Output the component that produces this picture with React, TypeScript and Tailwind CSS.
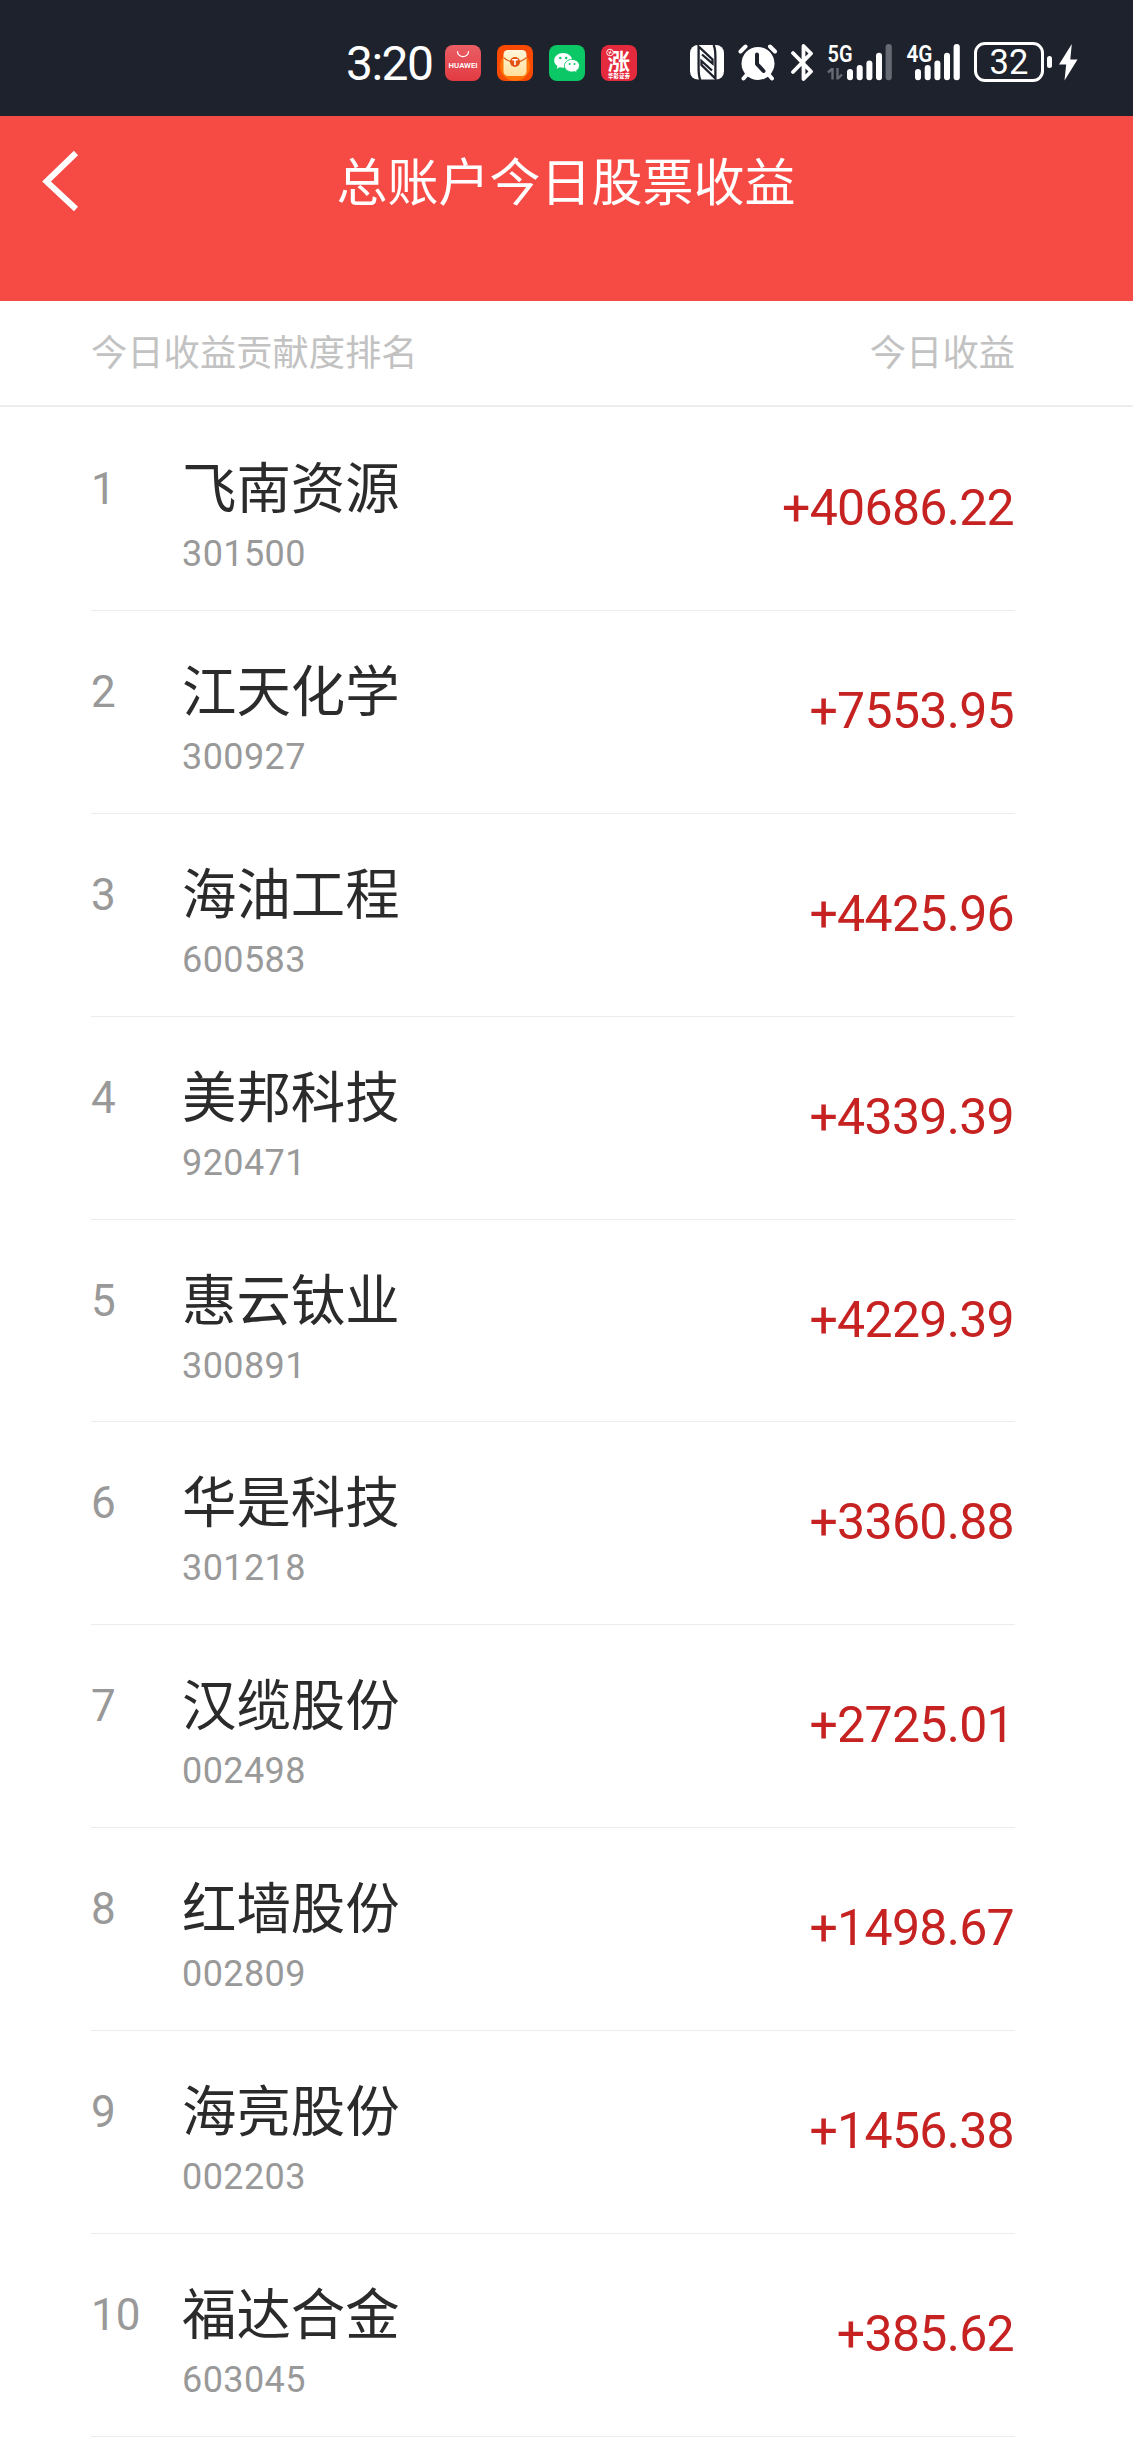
interface Stock {
  name: string;
  code: string;
  profit: string;
}

const stocks: Stock[] = [
  { name: '飞南资源', code: '301500', profit: '+40686.22' },
  { name: '江天化学', code: '300927', profit: '+7553.95' },
  { name: '海油工程', code: '600583', profit: '+4425.96' },
  { name: '美邦科技', code: '920471', profit: '+4339.39' },
  { name: '惠云钛业', code: '300891', profit: '+4229.39' },
  { name: '华是科技', code: '301218', profit: '+3360.88' },
  { name: '汉缆股份', code: '002498', profit: '+2725.01' },
  { name: '红墙股份', code: '002809', profit: '+1498.67' },
  { name: '海亮股份', code: '002203', profit: '+1456.38' },
  { name: '福达合金', code: '603045', profit: '+385.62' },
];

function AppBadges() {
  return (
    <div className="ml-[13px] flex gap-4">
      {/* Huawei store */}
      <svg width="36" height="36" viewBox="0 0 36 36" className="overflow-visible">
        <defs>
          <linearGradient id="store" x1="0" y1="0" x2="0" y2="1">
            <stop offset="0" stopColor="#ea5f65" />
            <stop offset="1" stopColor="#e23a42" />
          </linearGradient>
        </defs>
        <rect width="36" height="36" rx="8" fill="url(#store)" />
        <path d="M12.500 6.500a5.500 5.200 0 0 0 11 0" fill="none" stroke="#fff" strokeWidth="1.200" strokeLinecap="round" />
        <text x="3.600" y="23" textLength="29" lengthAdjust="spacingAndGlyphs" fill="#fff" fontSize="7.200" fontWeight="600" className="font-['Roboto',sans-serif]">HUAWEI</text>
      </svg>
      {/* Orange pouch */}
      <svg width="36" height="36" viewBox="0 0 36 36">
        <defs>
          <linearGradient id="pouch" x1="0" y1="0" x2="0" y2="1">
            <stop offset="0" stopColor="#fff6dc" />
            <stop offset="1" stopColor="#ffdf9c" />
          </linearGradient>
        </defs>
        <rect width="36" height="36" rx="8" fill="#f84a03" />
        <circle cx="18" cy="21" r="15" fill="#ff7308" />
        <rect x="6.500" y="5" width="23" height="26" rx="4.500" fill="url(#pouch)" />
        <path d="M6.500 12.500c3 2.800 6 4.500 11.500 5c5.500-.5 8.500-2.200 11.500-5" fill="none" stroke="#dd6018" strokeWidth="1.200" />
        <circle cx="18" cy="17" r="5" fill="#e4500f" />
        <path d="M15.200 14.800h5.600M18 14.800v5.200" stroke="#fff" strokeWidth="1.600" />
      </svg>
      {/* WeChat */}
      <svg width="36" height="36" viewBox="0 0 36 36">
        <rect width="36" height="36" rx="8" fill="#0bc765" />
        <path d="M14.200 8C9.200 8 5.200 11.300 5.200 15.400c0 2.300 1.300 4.400 3.300 5.700l-.8 2.600 3-1.500c1.100.3 2.300.5 3.500.5 5 0 9-3.300 9-7.300S19.200 8 14.200 8z" fill="#fff" />
        <path d="M23 14.400c-4.200 0-7.600 2.900-7.600 6.300 0 3.500 3.400 6.300 7.600 6.300.9 0 1.800-.1 2.600-.4l2.600 1.300-.7-2.200c1.900-1.200 3-3 3-5 0-3.400-3.300-6.300-7.500-6.300z" fill="#fff" stroke="#0bc765" strokeWidth=".9" />
        <circle cx="11.300" cy="13" r="1.200" fill="#0bc765" />
        <circle cx="17.200" cy="13" r="1.200" fill="#0bc765" />
        <circle cx="20.600" cy="18.900" r="1" fill="#0bc765" />
        <circle cx="25.500" cy="18.900" r="1" fill="#0bc765" />
      </svg>
      {/* Brokerage app */}
      <svg width="36" height="36" viewBox="0 0 36 36" className="overflow-visible">
        <rect width="36" height="36" rx="8" fill="#e52a3d" />
        <text x="6.500" y="25" fill="#fff" fontSize="22.500" fontWeight="700" className="font-['Noto_Sans_CJK_SC',sans-serif]">涨</text>
        <circle cx="9" cy="7.500" r="3.300" fill="#e52a3d" stroke="#fff" strokeWidth=".9" />
        <path d="M7.200 7l3.500 1M9.800 5.500l-1.600 4" stroke="#fff" strokeWidth=".8" />
        <text x="7" y="32.800" textLength="22" fill="#fff" fontSize="5.200" fontWeight="900" className="font-['Noto_Sans_CJK_SC',sans-serif]">华彩证券</text>
      </svg>
    </div>
  );
}

function Signal({ label, dimLast, arrows }: { label: string; dimLast?: boolean; arrows?: boolean }) {
  return (
    <svg width="66" height="38" viewBox="0 0 66 38" fill="#fff" className="overflow-visible">
      <text x={arrows ? 0.5 : -0.5} y="18.500" fontSize="24" fontWeight="600" textLength={arrows ? 25 : 26} lengthAdjust="spacingAndGlyphs" className="font-['Roboto',sans-serif]">{label}</text>
      {arrows && (
        <g fill="none" stroke="#666a73" strokeWidth="2.400">
          <path d="M1 29.500l4-3.500M5.500 25v11.500" />
          <path d="M10.500 25v11.500M11 35.500l4-4" />
        </g>
      )}
      <g transform={arrows ? 'translate(0 0)' : 'translate(-12 0)'}>
        <rect x="20" y="26" width="6" height="11.300" rx="3" />
        <rect x="29.700" y="22" width="6" height="15.300" rx="3" />
        <rect x="39.400" y="17.500" width="6" height="19.800" rx="3" />
        <rect x="49" y="9.700" width="6" height="27.600" rx="3" />
        <rect x="58.600" y="1" width="6.200" height="36.300" rx="3" fill={dimLast ? '#666a73' : '#fff'} />
      </g>
    </svg>
  );
}

function StatusBar() {
  return (
    <div className="flex h-[116px] items-start bg-[#1e222d] pt-[45px] pl-[345px] text-white">
      <div className="w-[87px] pt-px pl-px font-['Roboto',sans-serif] text-[48px] leading-9 tracking-[-1.5px] whitespace-nowrap">3:20</div>
      <AppBadges />
      {/* NFC */}
      <svg width="34" height="35" viewBox="0 0 34 35" className="ml-[53px]">
        <rect width="34" height="34.500" rx="8" fill="#fff" />
        <g fill="none" stroke="#1e222d" strokeWidth="2.300">
          <path d="M10.500 35C8.500 32 8.600 27 8.600 22V1.500L22.500 14.500V18.500L12 9.500" />
          <path d="M23.500 0C25.500 3 25.400 8 25.400 13V33.500L11.500 20V16L22 25.500" />
        </g>
      </svg>
      {/* Alarm */}
      <svg width="40" height="38" viewBox="0 0 40 38" className="-mt-px ml-[14px]" fill="none" stroke="#fff" strokeWidth="4" strokeLinecap="round">
        <circle cx="20" cy="19.500" r="16.500" fill="#fff" stroke="none" />
        <path d="M2.500 7.500L7.500 2.500M37 7.500L32 2.500M8.500 31L5.500 34.500M31 31L34 34.500" />
        <path d="M19 10.500v9.500l6.500 7" stroke="#1e222d" strokeLinejoin="round" />
      </svg>
      {/* Bluetooth */}
      <svg width="24" height="38" viewBox="0 0 24 38" className="-mt-[2px] ml-[12px]" fill="none" stroke="#fff" strokeWidth="3.800" strokeLinecap="round" strokeLinejoin="round">
        <path d="M3 10l18 18.500-7.500 7.500V3L21 10.500 3 29" />
      </svg>
      <div className="-mt-[2px] ml-[13px] flex">
        <Signal label="5G" dimLast arrows />
        <div className="ml-[14px]">
          <Signal label="4G" />
        </div>
      </div>
      <div className="-mt-[3px] ml-px flex items-center">
        <div className="flex h-10 w-[70px] items-center justify-center rounded-[11px] border-[3px] border-white font-['Roboto',sans-serif] text-[34.500px] leading-none">32</div>
        <div className="ml-[3px] h-3 w-[5px] rounded-sm bg-white" />
        <svg width="19" height="37" viewBox="0 0 19 37" className="ml-[7px]" fill="#fff">
          <path d="M12.800 0L0 20.500h7.200L5.500 36.500 18.500 15.500H11.300z" />
        </svg>
      </div>
    </div>
  );
}

function StockRow({ stock, rank }: { stock: Stock; rank: number }) {
  return (
    <li className="mr-[118px] ml-[91px] flex h-[202.900px] border-b border-[#ececec]">
      <span className="mt-[45px] w-[91px] font-['Roboto',sans-serif] text-[44px] leading-[72px] text-[#999]">{rank}</span>
      <div className="flex-1 pt-[45px]">
        <div className="font-['Noto_Sans_CJK_SC',sans-serif] text-[54.400px] leading-[64px] text-[#2b2b2b]">{stock.name}</div>
        <div className="mt-[13px] font-['Roboto',sans-serif] text-[36px] leading-[48px] tracking-[0.4px] text-[#999]">{stock.code}</div>
      </div>
      <span className="mt-[68px] mr-px font-['Roboto',sans-serif] text-[50px] leading-[64px] tracking-[-0.700px] text-[#c62222]">{stock.profit}</span>
    </li>
  );
}

export default function App() {
  return (
    <div className="h-[2453px] w-[1133px] overflow-hidden bg-white">
      <StatusBar />
      <header className="flex h-[185px] items-start bg-[#f64a45] text-white">
        <svg width="40" height="62" viewBox="0 0 40 62" className="mt-[34px] ml-[40px]" fill="none" stroke="#fff" strokeWidth="6">
          <path d="M36 3L6.500 31.500 36 59" />
        </svg>
        <h1 className="mr-[81px] flex-1 pt-[31px] text-center font-['Noto_Sans_CJK_SC',sans-serif] text-[51px] leading-[64px]">总账户今日股票收益</h1>
      </header>
      <div className="flex h-[106px] items-center justify-between border-b-2 border-[#ededed] pr-[118px] pb-[5px] pl-[91px] font-['Noto_Sans_CJK_SC',sans-serif] text-[36.300px] leading-none text-[#c2c2c2]">
        <span>今日收益贡献度排名</span>
        <span>今日收益</span>
      </div>
      <ul className="pt-px">
        {stocks.map((stock, i) => (
          <StockRow key={stock.code} stock={stock} rank={i + 1} />
        ))}
      </ul>
    </div>
  );
}
